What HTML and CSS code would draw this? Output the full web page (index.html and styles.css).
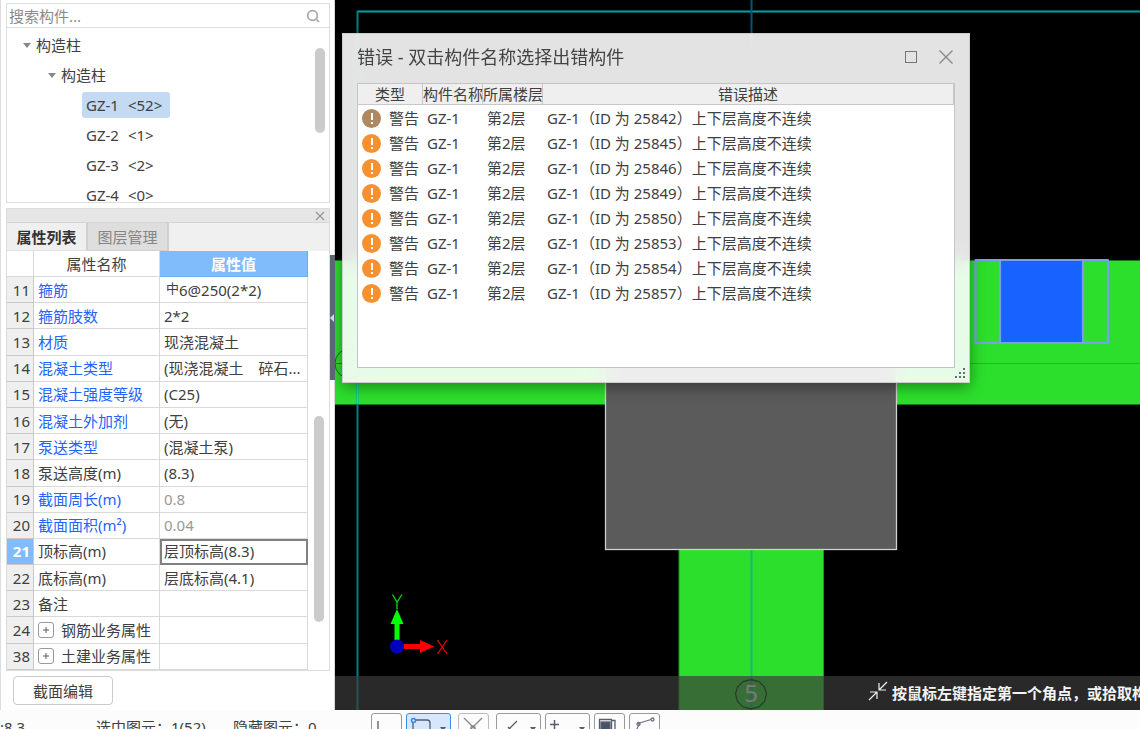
FILE: index.html
```html
<!DOCTYPE html>
<html lang="zh-CN">
<head>
<meta charset="utf-8">
<title>构件属性</title>
<link rel="stylesheet" href="styles.css">
</head>
<body>
<div class="workspace">
  <aside class="side">
    <section class="tree-panel">
      <label class="search">
        <input type="search" placeholder="搜索构件..." aria-label="搜索构件">
        <svg width="16" height="16" viewBox="0 0 16 16" fill="none" stroke="#a8a8a8" stroke-width="1.7"><circle cx="7.5" cy="7.5" r="4.8"/><path d="M11 11l3 3"/></svg>
      </label>
      <div class="tree-box">
        <ul class="tree">
          <li class="node level-1"><span class="caret"></span>构造柱</li>
          <li class="node level-2"><span class="caret"></span>构造柱</li>
          <li class="node level-3"><button class="leaf selected"><span>GZ-1</span> <span>&lt;52&gt;</span></button></li>
          <li class="node level-3"><button class="leaf"><span>GZ-2</span> <span>&lt;1&gt;</span></button></li>
          <li class="node level-3"><button class="leaf"><span>GZ-3</span> <span>&lt;2&gt;</span></button></li>
          <li class="node level-3"><button class="leaf"><span>GZ-4</span> <span>&lt;0&gt;</span></button></li>
        </ul>
        <div class="scroll tree-scroll"><span class="thumb"></span></div>
      </div>
    </section>
    <section class="dock">
      <header class="dock-bar">
        <button class="dock-close" aria-label="关闭"><svg width="10" height="10" viewBox="0 0 10 10" stroke="#999" stroke-width="1.3"><path d="M1 1l8 8M9 1l-8 8"/></svg></button>
      </header>
      <div class="tabs"><button class="tab active">属性列表</button><button class="tab">图层管理</button></div>
      <div class="props">
        <table class="prop-table">
          <colgroup><col class="col-no"><col class="col-name"><col></colgroup>
          <thead><tr><th></th><th>属性名称</th><th class="value-head">属性值</th></tr></thead>
          <tbody>
            <tr><th>11</th><td class="link">箍筋</td><td><span class="rebar">中</span>6@250(2*2)</td></tr>
            <tr><th>12</th><td class="link">箍筋肢数</td><td>2*2</td></tr>
            <tr><th>13</th><td class="link">材质</td><td>现浇混凝土</td></tr>
            <tr><th>14</th><td class="link">混凝土类型</td><td>(现浇混凝土　碎石...</td></tr>
            <tr><th>15</th><td class="link">混凝土强度等级</td><td>(C25)</td></tr>
            <tr><th>16</th><td class="link">混凝土外加剂</td><td>(无)</td></tr>
            <tr><th>17</th><td class="link">泵送类型</td><td>(混凝土泵)</td></tr>
            <tr><th>18</th><td>泵送高度(m)</td><td>(8.3)</td></tr>
            <tr><th>19</th><td class="link">截面周长(m)</td><td class="muted">0.8</td></tr>
            <tr><th>20</th><td class="link">截面面积(m²)</td><td class="muted">0.04</td></tr>
            <tr class="current"><th>21</th><td>顶标高(m)</td><td class="editing">层顶标高(8.3)</td></tr>
            <tr><th>22</th><td>底标高(m)</td><td>层底标高(4.1)</td></tr>
            <tr><th>23</th><td>备注</td><td></td></tr>
            <tr><th>24</th><td><div class="group"><button class="expand" aria-label="展开"><svg width="8" height="8" viewBox="0 0 8 8" stroke="#555d6b"><path d="M4 1v6M1 4h6"/></svg></button>钢筋业务属性</div></td><td></td></tr>
            <tr><th>38</th><td><div class="group"><button class="expand" aria-label="展开"><svg width="8" height="8" viewBox="0 0 8 8" stroke="#555d6b"><path d="M4 1v6M1 4h6"/></svg></button>土建业务属性</div></td><td></td></tr>
          </tbody>
        </table>
        <div class="scroll prop-scroll"><span class="thumb"></span></div>
      </div>
    </section>
    <footer class="side-actions"><button class="section-edit">截面编辑</button></footer>
    <button class="splitter" aria-label="收起面板"><span class="splitter-arrow"></span></button>
  </aside>

  <main class="canvas">
    <svg class="scene" width="100%" height="100%">
      <g transform="translate(-335 0)">
        <path d="M357 11.500H2400" stroke="#00a4a8" stroke-width="2" fill="none"/>
        <path d="M751.500 0V550" stroke="#005878" stroke-width="2"/>
        <rect x="330" y="260.500" width="2100" height="144" fill="#2cdf2c" stroke="#137a13"/>
        <rect x="679" y="540" width="144.500" height="200" fill="#2cdf2c" stroke="#1d9a1d"/>
        <path d="M357.500 11V2000" stroke="#008080" stroke-width="2"/>
        <path d="M357.500 261V404" stroke="#18e090" stroke-width="2"/>
        <path d="M751.500 550V740" stroke="#1cb57c" stroke-width="2"/>
        <path d="M900 363.500H2400" stroke="#14a99a"/>
        <circle cx="350" cy="363.500" r="15" fill="none" stroke="#0f6a0f"/>
        <path d="M335 363.500H365" stroke="#a8401c"/>
        <rect x="605.500" y="300" width="291" height="249.500" fill="#5b5b5b" stroke="#d0d0d0" stroke-width="1.300"/>
        <rect x="1000" y="260" width="83" height="83" fill="#1863ff"/>
        <path d="M975.500 260H1108V343H975.500ZM1000 260V343M1083 260V343" fill="none" stroke="#78a0ef" stroke-width="2.200" stroke-linejoin="round"/>
        <path d="M397 646V622" stroke="#0f0" stroke-width="5"/><path d="M397 609l6.500 15h-13z" fill="#0f0"/>
        <path d="M397 646.500H421" stroke="#f00" stroke-width="5"/><path d="M434 646.500l-14 -6.500v13z" fill="#f00"/>
        <circle cx="397" cy="646.500" r="7" fill="#0000bf"/>
        <path d="M392.500 594.500l4.500 7.500l5 -7.500M397 602v7" fill="none" stroke="#00e000" stroke-width="1.300"/>
        <path d="M437.500 640l9.500 14M447 640l-9.500 14" fill="none" stroke="#f00000" stroke-width="1.300"/>
        <path d="M751 679.500l8 2 5.500 5.500 2 7-2 7.500-5.500 5.500-8 2-8-2-5.500-5.500-2-7.500 2-7 5.500-5.500z" fill="none" stroke="#0a3d0a" stroke-width="1.300"/>
        <text class="axis-number" x="751" y="702" text-anchor="middle">5</text>
      </g>
    </svg>
    <div class="hint">
      <svg width="20" height="24" viewBox="0 0 20 24" fill="none" stroke="#eee" stroke-width="1.200"><path d="M19 1l-8 8M11 2v7h7M1 19l8-8M2 11h7v7"/></svg>
      <span>按鼠标左键指定第一个角点，或拾取构件</span>
    </div>

    <section class="dialog" role="dialog" aria-label="错误">
      <header class="dialog-head">
        <h1>错误 - 双击构件名称选择出错构件</h1>
        <button class="win-btn" aria-label="最大化"><svg width="14" height="14" viewBox="0 0 14 14" fill="none" stroke="#777"><rect x="1.500" y="1.500" width="11" height="11"/></svg></button>
        <button class="win-btn" aria-label="关闭"><svg width="14" height="14" viewBox="0 0 14 14" stroke="#858585" stroke-width="1.300"><path d="M.5 .5l13 13M13.500 .5l-13 13"/></svg></button>
      </header>
      <div class="dialog-list">
        <table class="errors">
          <colgroup><col class="c-type"><col class="c-name"><col class="c-floor"><col></colgroup>
          <thead><tr><th>类型</th><th>构件名称</th><th>所属楼层</th><th>错误描述</th></tr></thead>
          <tbody>
            <tr><td><span class="warn seen"></span>警告</td><td>GZ-1</td><td>第2层</td><td>GZ-1（ID 为 25842）上下层高度不连续</td></tr>
            <tr><td><span class="warn"></span>警告</td><td>GZ-1</td><td>第2层</td><td>GZ-1（ID 为 25845）上下层高度不连续</td></tr>
            <tr><td><span class="warn"></span>警告</td><td>GZ-1</td><td>第2层</td><td>GZ-1（ID 为 25846）上下层高度不连续</td></tr>
            <tr><td><span class="warn"></span>警告</td><td>GZ-1</td><td>第2层</td><td>GZ-1（ID 为 25849）上下层高度不连续</td></tr>
            <tr><td><span class="warn"></span>警告</td><td>GZ-1</td><td>第2层</td><td>GZ-1（ID 为 25850）上下层高度不连续</td></tr>
            <tr><td><span class="warn"></span>警告</td><td>GZ-1</td><td>第2层</td><td>GZ-1（ID 为 25853）上下层高度不连续</td></tr>
            <tr><td><span class="warn"></span>警告</td><td>GZ-1</td><td>第2层</td><td>GZ-1（ID 为 25854）上下层高度不连续</td></tr>
            <tr><td><span class="warn"></span>警告</td><td>GZ-1</td><td>第2层</td><td>GZ-1（ID 为 25857）上下层高度不连续</td></tr>
          </tbody>
        </table>
      </div>
      <svg class="grip" width="10" height="10" viewBox="0 0 10 10" fill="#666c78"><path d="M8 0h2v2H8zM8 4h2v2H8zM4 4h2v2H4zM8 8h2v2H8zM4 8h2v2H4zM0 8h2v2H0z"/></svg>
    </section>
  </main>
</div>

<footer class="status">
  <span class="status-height">:8.3</span>
  <span class="status-picked">选中图元：1(52)</span>
  <span class="status-hidden">隐藏图元：0</span>
  <div class="tools">
    <button class="tool" aria-label="正交"><svg width="29" height="28" viewBox="0 0 29 28" fill="none" stroke="#555d6f" stroke-width="1.300"><path d="M6 7v14h15"/></svg></button>
    <button class="tool wide active" aria-label="矩形选择"><svg width="43" height="28" viewBox="0 0 43 28" fill="none" stroke="#555d6f" stroke-width="1.300"><path d="M9 6h11q3 0 3 3v12H6V9"/><circle cx="6.500" cy="6.500" r="2" stroke="#2f86f0" stroke-width="1.500"/><path d="M33 13h6l-3 4z" fill="#555d6f" stroke="none"/></svg></button>
    <button class="tool gap faded" aria-label="交点"><svg width="29" height="28" viewBox="0 0 29 28" fill="none" stroke="#888" stroke-width="1.300"><path d="M5 4l18 18M23 4L5 22"/><circle cx="14" cy="14" r="2"/></svg></button>
    <button class="tool wide gap" aria-label="偏移"><svg width="43" height="28" viewBox="0 0 43 28" fill="none" stroke="#555d6f" stroke-width="1.300"><path d="M20 7L8 19M11 13l3 3"/><path d="M33 13h6l-3 4z" fill="#555d6f" stroke="none"/></svg></button>
    <button class="tool wide" aria-label="添加点"><svg width="43" height="28" viewBox="0 0 43 28" fill="none" stroke="#555d6f" stroke-width="1.500"><path d="M8.500 6v9M4 10.500h9"/><path d="M33 13h6l-3 4z" fill="#555d6f" stroke="none"/></svg></button>
    <button class="tool" aria-label="显示"><svg width="29" height="28" viewBox="0 0 29 28" fill="none" stroke="#555d6f" stroke-width="1.300"><path d="M4.500 5.500h12v16h-12zM17 6.500h3v13"/><rect x="6" y="8" width="9" height="12" fill="#4b5366"/></svg></button>
    <button class="tool" aria-label="曲线"><svg width="29" height="28" viewBox="0 0 29 28" fill="none" stroke="#6c7280" stroke-width="1.300"><path d="M6 20q1-8 4-10.500M8 9.500l13-4"/><circle cx="22.500" cy="5.500" r="1.500"/><circle cx="8.500" cy="10" r="1.500"/></svg></button>
  </div>
</footer>
</body>
</html>
```

FILE: styles.css
```css
* { box-sizing: border-box; }

body {
  margin: 0;
  height: 100vh;
  display: grid;
  grid-template-rows: minmax(0, 1fr) 19px;
  overflow: hidden;
  background: #fff;
  color: #404040;
  font: 15px/20px "Noto Sans", "Noto Sans CJK SC", sans-serif;
}

button, input { font: inherit; color: inherit; }
button { margin: 0; padding: 0; border: 0; background: none; }
svg { display: block; }

.workspace { display: grid; grid-template-columns: 335px minmax(0, 1fr); min-height: 0; }

/* Left side */
.side {
  position: relative;
  display: flex;
  flex-direction: column;
  min-height: 0;
  padding: 3px 4px 0 5px;
  border-left: 1px solid #ddd;
  border-right: 1px solid #d8d8d8;
}
.tree-panel { border: 1px solid #dedede; display: flex; flex-direction: column; height: 200px; flex: none; }
.search { display: flex; align-items: center; height: 24px; padding: 0 8px 0 2px; border-bottom: 1px solid #dedede; }
.search input { flex: 1; min-width: 0; padding: 0; border: 0; outline: 0; background: none; }
.search input::placeholder { color: #8a8a8a; opacity: 1; }
.tree-box { flex: 1; display: flex; min-height: 0; overflow: hidden; }
.tree { flex: 1; list-style: none; margin: 0; padding: 2px 0 0; }
.node { display: flex; align-items: center; height: 30px; }
.level-1 { padding-left: 16px; }
.level-2 { padding-left: 41px; }
.level-3 { padding-left: 75px; }
.caret { border: 4px solid transparent; border-top: 5px solid #888; border-bottom: 0; margin-right: 5px; }
.leaf { display: flex; align-items: center; gap: 9px; height: 26px; padding: 0 8px 0 4px; border-radius: 3px; white-space: nowrap; }
.leaf.selected { background: #c3daf2; }

.scroll { display: flex; justify-content: center; }
.thumb { width: 10px; border-radius: 5px; background: #cbcbcb; }
.tree-scroll { width: 18px; padding-top: 20px; }
.tree-scroll .thumb { height: 85px; }

.dock { flex: 1; min-height: 0; display: flex; flex-direction: column; margin-top: 5px; border: 1px solid #dcdcdc; }
.dock-bar { display: flex; justify-content: flex-end; align-items: center; height: 14px; padding-right: 4px; background: #e6e6e6; border-bottom: 1px solid #d4d4d4; flex: none; }
.tabs { display: flex; height: 28px; background: #f0f0f0; flex: none; }
.tab { width: 81px; border-right: 2px solid #d0d0d0; border-bottom: 1px solid #d0d0d0; background: #dedede; color: #858585; }
.tab.active { background: #efefef; color: #333; font-weight: 700; border-bottom-color: #e0e0e0; }

.props { flex: 1; min-height: 0; display: grid; grid-template-columns: minmax(0, 1fr) 21px; }
.prop-table { width: 100%; height: 100%; table-layout: fixed; border-collapse: separate; border-spacing: 0; line-height: 20px; }
.col-no { width: 27px; }
.col-name { width: 126px; }
.prop-table th, .prop-table td { height: 26px; padding: 0; border-right: 1px solid #d9d9d9; border-bottom: 1px solid #d9d9d9; white-space: nowrap; overflow: hidden; font-weight: 400; }
.prop-table td { padding-left: 4px; text-align: left; }
.prop-table tbody th { padding-right: 3px; text-align: right; background: #efefef; border-color: #c8c8c8; }
.prop-table .value-head { background: #80bbfb; color: #fff; font-weight: 700; border-color: #6fadf2; }
.prop-table .link { color: #2563ff; }
.prop-table .muted { color: #999; }
.prop-table .current th { background: #80bbfb; color: #fff; font-weight: 700; }
.prop-table .editing { outline: 2px solid #808080; outline-offset: -2px; }
.rebar { font-size: 13px; line-height: 13px; vertical-align: 3px; margin-left: 2px; }
.group { display: flex; align-items: center; gap: 7px; }
.expand { display: flex; align-items: center; justify-content: center; width: 16px; height: 16px; border: 1px solid #999; border-radius: 3px; }
.prop-scroll { padding-top: 165px; }
.prop-scroll .thumb { height: 206px; }

.side-actions { flex: none; padding: 5px 7px; }
.section-edit { width: 100px; height: 29px; border: 1px solid #cacaca; border-radius: 4px; background: #fff; display: block; }

.splitter { position: absolute; right: -1px; top: 255px; width: 5px; height: 125px; background: #5d6472; display: flex; align-items: center; }
.splitter-arrow { border: 4px solid transparent; border-right-color: #d4d8de; border-left: 0; }

/* Drawing area */
.canvas { position: relative; min-width: 0; background: #000; overflow: hidden; }
.scene { position: absolute; inset: 0; }
.axis-number { font: 24px "Noto Sans", sans-serif; fill: #fff; }
.hint {
  position: absolute; left: 0; right: 0; bottom: 0; height: 34px;
  display: flex; align-items: center; gap: 4px;
  padding-left: 533px;
  background: rgba(59, 59, 59, .69);
  color: #f4f4f4; font-weight: 700; white-space: nowrap; overflow: hidden;
}
.hint svg { flex: none; }

.dialog {
  position: absolute; left: 7px; top: 33px; width: 628px; height: 350px;
  display: flex; flex-direction: column;
  padding: 0 14px 14px;
  border: 1px solid #cdcdcd;
  background: rgba(255, 255, 255, .89);
  backdrop-filter: blur(10px);
  box-shadow: 0 4px 14px rgba(0, 0, 0, .4);
}
.dialog-head { display: flex; align-items: center; height: 49px; gap: 21px; padding: 0 2px 3px 0; flex: none; }
.dialog-head h1 { flex: 1; margin: 0; font-size: 18px; line-height: 24px; font-weight: 400; color: #444; }
.dialog-list { flex: 1; min-height: 0; border: 1px solid #c4c4c4; background: #fff; }
.errors { width: 100%; table-layout: fixed; border-collapse: separate; border-spacing: 0; }
.c-type { width: 65px; }
.c-name, .c-floor { width: 60px; }
.errors th { height: 21px; padding: 0; background: #efefef; border-right: 1px solid #c8c8c8; border-bottom: 1px solid #c8c8c8; font-weight: 400; line-height: 20px; white-space: nowrap; }
.errors td { height: 25px; padding: 0 0 0 4px; line-height: 20px; white-space: nowrap; }
.warn {
  display: inline-block; width: 19px; height: 19px; margin-right: 8px; border-radius: 50%;
  vertical-align: -4px;
  background:
    linear-gradient(#fff, #fff) center 4px / 2px 7px no-repeat,
    linear-gradient(#fff, #fff) center 13px / 2px 2px no-repeat,
    #f7912f;
}
.warn.seen { background-color: #ad8860; }
.grip { position: absolute; right: 4px; bottom: 4px; }

/* Status bar */
.status { position: relative; display: flex; align-items: flex-start; overflow: hidden; background: #fcfcfc; white-space: nowrap; }
.status span { padding-top: 7px; line-height: 20px; }
.status-height { width: 96px; }
.status-picked { width: 137px; }
.status-hidden { width: 138px; }
.status > * { flex: none; }
.tools { display: flex; gap: 4px; padding-top: 3px; }
.tool { width: 31px; height: 30px; border: 1px solid #999; border-radius: 3px; background: #fcfcfc; }
.tool.wide { width: 45px; }
.tool.gap { margin-left: 3px; }
.tool.active { border-color: #3b8cf0; background: #d6e6fb; }
.tool.faded { border-color: #bbb; }
```
